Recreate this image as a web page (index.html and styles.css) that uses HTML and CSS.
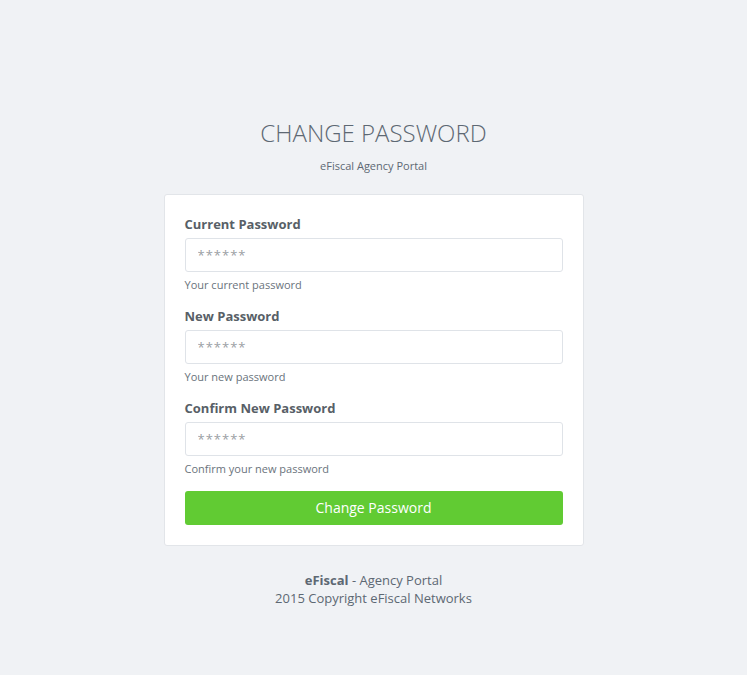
FILE: index.html
```html
<!DOCTYPE html>
<html>
<head>
<meta charset="utf-8">
<link rel="stylesheet" href="styles.css">
</head>
<body>
<div class="page">
  <h1 class="title">CHANGE PASSWORD</h1>
  <p class="subtitle">eFiscal Agency Portal</p>
  <form class="card">
    <div class="group">
      <label class="label">Current Password</label>
      <input class="input" type="password" placeholder="******">
      <div class="help">Your current password</div>
    </div>
    <div class="group">
      <label class="label">New Password</label>
      <input class="input" type="password" placeholder="******">
      <div class="help">Your new password</div>
    </div>
    <div class="group">
      <label class="label">Confirm New Password</label>
      <input class="input" type="password" placeholder="******">
      <div class="help">Confirm your new password</div>
    </div>
    <button class="btn" type="button">Change Password</button>
  </form>
  <div class="footer">
    <div><b>eFiscal</b> - Agency Portal</div>
    <div>2015 Copyright eFiscal Networks</div>
  </div>
</div>
</body>
</html>
```
FILE: styles.css
```css
html, body {
  margin: 0;
  padding: 0;
  background: #f0f2f5;
  font-family: "Open Sans", "Noto Sans", sans-serif;
  color: #5b6670;
}
.page {
  display: flex;
  flex-direction: column;
  align-items: center;
  padding-top: 116px;
}
.title {
  margin: 0;
  font-size: 24px;
  font-weight: 300;
  line-height: 34px;
  color: #5d6873;
  letter-spacing: 0;
}
.subtitle {
  margin: 7px 0 0;
  font-size: 11px;
  line-height: 18px;
  color: #5d6873;
}
.card {
  margin-top: 19px;
  width: 378px;
  padding: 20px 20px 20px;
  background: #fff;
  border: 1px solid #e2e5e9;
  border-radius: 3px;
  display: flex;
  flex-direction: column;
}
.group {
  display: flex;
  flex-direction: column;
  margin-bottom: 14px;
}
.label {
  font-size: 13px;
  font-weight: 700;
  line-height: 18px;
  color: #585f67;
  margin-bottom: 5px;
}
.input {
  box-sizing: border-box;
  height: 34px;
  width: 100%;
  border: 1px solid #dfe3e8;
  border-radius: 3px;
  padding: 0 12px;
  font-family: inherit;
  font-size: 13px;
  outline: none;
}
.input::placeholder {
  color: #9a9ea3;
  letter-spacing: 1px;
}
.help {
  margin-top: 5px;
  font-size: 11px;
  line-height: 16px;
  color: #6a737c;
}
.btn {
  height: 34px;
  width: 100%;
  border: none;
  border-radius: 3px;
  background: #61cb33;
  color: #fff;
  font-family: inherit;
  font-size: 14px;
  padding: 0 0 2px;
}
.footer {
  margin-top: 25px;
  text-align: center;
  font-size: 13px;
  line-height: 18px;
  color: #5d6873;
}
.footer b {
  font-weight: 700;
}
```
